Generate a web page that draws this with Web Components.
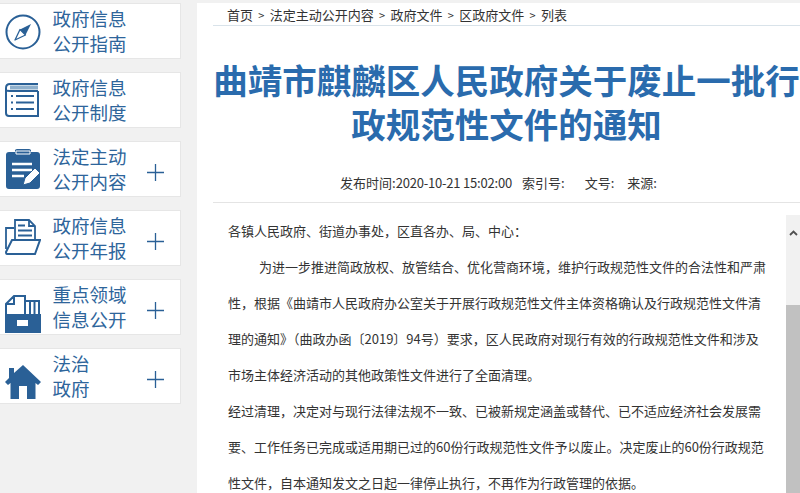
<!DOCTYPE html>
<html lang="zh"><head><meta charset="utf-8">
<style>
html,body{margin:0;padding:0;height:493px;overflow:hidden;background:#f1f1f1;font-family:"Noto Sans CJK SC","Noto Sans",sans-serif}
</style></head><body>
<gov-page>
  <gov-sidebar slot="side">
    <gov-card l1="政府信息" l2="公开指南"><svg slot="icon" style="margin-top:2px" viewBox="0 0 36 36" width="36" height="36" fill="none" stroke="#2a6096" stroke-width="2"><circle cx="18" cy="18" r="16.500"/><path d="M26 10 20.500 21 15 15.500Z" fill="#2a6096" stroke="none"/><path d="M10 26 15 15.500 20.500 21Z" stroke-width="1.300" stroke-linejoin="round"/></svg></gov-card>
    <gov-card l1="政府信息" l2="公开制度"><svg slot="icon" viewBox="0 0 34 35" width="34" height="35" fill="none" stroke="#2a6096" stroke-width="2"><path d="M5 4.500H33" stroke="#8fb0cc" stroke-width="4"/><path d="M1 11V5Q1 1 5 1H33M1 8Q1 7.500 5 8H33M1 11V30Q1 33 4 33H33V8"/><path d="M11 13H29M11 19.500H29M11 26H29M6 13H8M6 19.500H8M6 26H8"/></svg></gov-card>
    <gov-card l1="法定主动" l2="公开内容" plus><svg slot="icon" viewBox="0 0 36 40" width="36" height="40"><path d="M4 3H10V1.500Q10 0 12 0H24Q26 0 26 1.500V3H32Q35 3 35 6V37Q35 40 32 40H4Q1 40 1 37V6Q1 3 4 3Z" fill="#2a6096"/><path d="M11 2H25V5H11Z" fill="#2a6096" stroke="#fff" stroke-width="1"/><path d="M7 15H27M7 21H27M7 27H19" stroke="#fff" stroke-width="2.500"/><path d="M18 36 20 29 30 19 35 24 25 34Z" fill="#fff" stroke="#2a6096" stroke-width="1"/></svg></gov-card>
    <gov-card l1="政府信息" l2="公开年报" plus><svg slot="icon" viewBox="0 0 36 38" width="36" height="38" fill="none" stroke="#2a6096" stroke-width="1.800"><path d="M1 30V9H9M10 21V1H24L30 7V21"/><path d="M24 1V7H30"/><path d="M13 6.500H20M13 11.500H27M13 16.500H27" stroke-width="1.800"/><path d="M7 21H35L30 35H2Q1 35 1 33Z" stroke-width="2"/></svg></gov-card>
    <gov-card l1="重点领域" l2="信息公开" plus><svg slot="icon" style="margin-top:14px" viewBox="0 0 36 38" width="36" height="38"><path d="M1 19V9L9 1H20V19M20 6H34V19M25 6V19M29.500 6V19M9 1V9H2" fill="none" stroke="#2a6096" stroke-width="2"/><path d="M0 19H36V38H0Z" fill="#2a6096"/><path d="M12 25H23V31H12Z" fill="#fff"/></svg></gov-card>
    <gov-card l1="法治" l2="政府" plus><svg slot="icon" style="margin-top:12px" viewBox="0 0 36 34" width="36" height="34"><path d="M18 0 36 17 33 20 30.500 18V34H22V21H14V34H5.500V18L3 20 0 17 4 13V3H9V8Z" fill="#2a6096"/></svg></gov-card>
  </gov-sidebar>
  <gov-article slot="main"></gov-article>
</gov-page>
<template id="page-t"><style>
:host{display:flex;height:493px;padding-top:3px;box-sizing:border-box;gap:16px}
::slotted([slot=side]){flex:none}::slotted([slot=main]){flex:1;min-width:0}
</style><slot name="side"></slot><slot name="main"></slot></template>
<template id="side-t"><style>
:host{display:flex;flex-direction:column;gap:13px;width:181px}
</style><slot></slot></template>
<template id="card-t"><style>
:host{display:flex;align-items:center;box-sizing:border-box;height:56px;background:#fff;border:1px solid #e6e6e6;border-left:0;color:#2e659b;font-size:18.500px;line-height:25px;position:relative}
.i{width:52.500px;flex:none;display:flex;justify-content:flex-start;padding-left:5px;box-sizing:border-box}
.t{flex:1;white-space:nowrap;margin-top:-1px}
.p{width:17px;height:17px;margin:6px 16px 0 0;flex:none;display:none}
:host([plus]) .p{display:block}
</style><div class="i"><slot name="icon"></slot></div><div class="t"><div id="a"></div><div id="b"></div></div>
<svg class="p" viewBox="0 0 17 17"><path d="M0 8.500H17M8.500 0V17" stroke="#2a6096" stroke-width="1.300"/></svg></template>
<template id="article-t"><style>
:host{display:flex;flex-direction:column;height:490px;background:#fff;overflow:hidden;padding-left:16px;box-sizing:border-box}
.crumb{height:22px;border-bottom:1px solid #d9e3ea;padding-left:14px;font-size:13px;line-height:24px;color:#333;white-space:nowrap;flex:none}
.crumb span{margin:0 5.300px;font-size:11px}
h1{margin:31px 0 0 -16px;width:603px;padding-left:16px;box-sizing:border-box;text-align:center;font-size:34.500px;line-height:44px;font-weight:700;color:#2a6bad;white-space:nowrap;flex:none}
.meta{margin-top:25px;height:32px;border-bottom:1px solid #e4e4e4;font-size:13px;line-height:26px;color:#333;padding-left:127px;white-space:nowrap;flex:none}
.meta b{font-weight:400;letter-spacing:-.2px}
.meta span{margin-left:10px}.meta span+span{margin-left:20px}.meta span+span+span{margin-left:13px}
.wrap{display:flex;flex:1;min-height:0;padding-top:12px}
.body{flex:1;padding-left:15px;margin-top:-2px;font-size:13px;line-height:36px;color:#333;white-space:nowrap}
.body p{margin:0}.ind{padding-left:31px}
</style><div class="crumb">首页<span>&gt;</span>法定主动公开内容<span>&gt;</span>政府文件<span>&gt;</span>区政府文件<span>&gt;</span>列表</div>
<h1>曲靖市麒麟区人民政府关于废止一批行<br>政规范性文件的通知</h1>
<div class="meta">发布时间:<b>2020-10-21 15:02:00</b><span>索引号:</span><span>文号:</span><span>来源:</span></div>
<div class="wrap"><div class="body">
<p>各镇人民政府、街道办事处&#xFF0C;区直各办、局、中心&#xFF1A;</p>
<p class="ind">为进一步推进简政放权、放管结合、优化营商环境&#xFF0C;维护行政规范性文件的合法性和严肃</p>
<p>性&#xFF0C;根据《曲靖市人民政府办公室关于开展行政规范性文件主体资格确认及行政规范性文件清</p>
<p>理的通知》&#xFF08;曲政办函〔2019〕94号&#xFF09;要求&#xFF0C;区人民政府对现行有效的行政规范性文件和涉及</p>
<p>市场主体经济活动的其他政策性文件进行了全面清理。</p>
<p>经过清理&#xFF0C;决定对与现行法律法规不一致、已被新规定涵盖或替代、已不适应经济社会发展需</p>
<p>要、工作任务已完成或适用期已过的60份行政规范性文件予以废止。决定废止的60份行政规范</p>
<p>性文件&#xFF0C;自本通知发文之日起一律停止执行&#xFF0C;不再作为行政管理的依据。</p>
</div><gov-scrollbar></gov-scrollbar></div></template>
<template id="sb-t"><style>
:host{display:flex;flex-direction:column;flex:none;width:14px;background:#f1f1f1}
.b{height:35px;display:flex;align-items:center;justify-content:center;flex:none}
.g{height:55px;flex:none}.th{flex:1;background:#c1c1c1}
</style><div class="b"><svg width="9" height="6" viewBox="0 0 9 6"><path d="M1 5 4.500 1.500 8 5" fill="none" stroke="#505050" stroke-width="1.800"/></svg></div><div class="g"></div><div class="th"></div></template>
<script>
function def(n,t,after){customElements.define(n,class extends HTMLElement{constructor(){super();this.attachShadow({mode:'open'}).appendChild(document.getElementById(t).content.cloneNode(true));}connectedCallback(){after&&after(this)}})}
def('gov-page','page-t');def('gov-sidebar','side-t');def('gov-article','article-t');def('gov-scrollbar','sb-t');
def('gov-card','card-t',e=>{e.shadowRoot.getElementById('a').textContent=e.getAttribute('l1');e.shadowRoot.getElementById('b').textContent=e.getAttribute('l2')});
</script>
</body></html>
